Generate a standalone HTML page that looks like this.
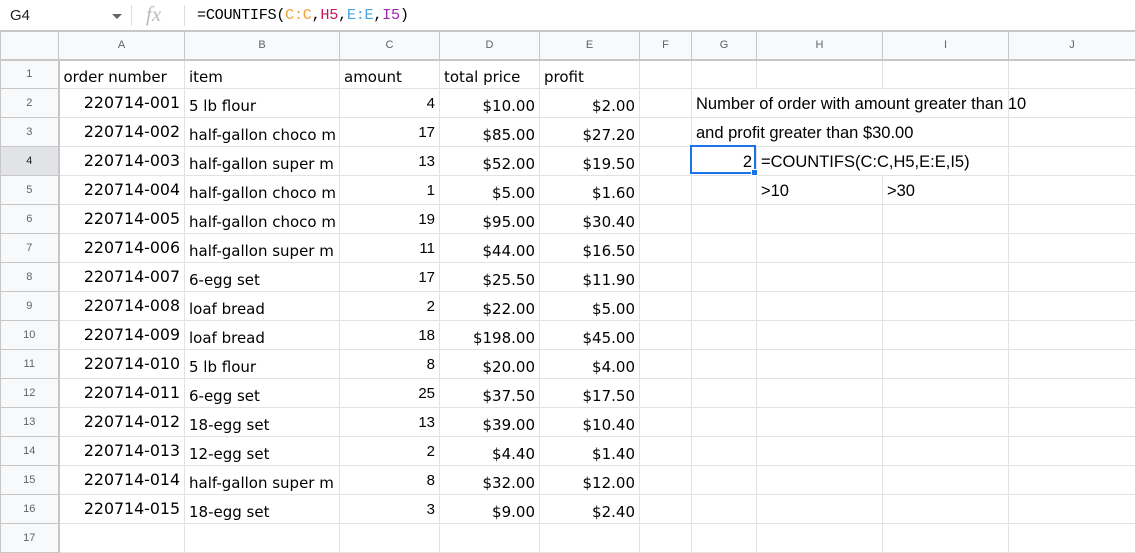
<!DOCTYPE html>
<html><head><meta charset="utf-8"><style>
*{margin:0;padding:0;box-sizing:border-box}
body{width:1135px;height:552px;overflow:hidden;background:#fff;font-family:"Liberation Sans",Arial,sans-serif;color:#000;position:relative}
#fb{position:absolute;left:0;top:0;width:1135px;height:31px;border-bottom:1px solid #c7c7c7;background:#fff}
#nb{position:absolute;left:10px;top:7px;font-size:15px;color:#222}
#arr{position:absolute;left:112px;top:14px;width:0;height:0;border-left:5px solid transparent;border-right:5px solid transparent;border-top:5px solid #666}
.sep{position:absolute;top:5px;width:1px;height:21px;background:#dadce0}
#fx{position:absolute;left:146px;top:2px;font-family:"Liberation Serif",serif;font-style:italic;font-size:21px;color:#bbb}
#fml{position:absolute;left:197px;top:6px;font-family:"Liberation Mono",monospace;font-size:15.2px;color:#000;letter-spacing:-0.3px}
table{position:absolute;left:0;top:31px;width:1135px;border-collapse:collapse;table-layout:fixed}
td{height:29px;border:1px solid #e2e2e2;white-space:nowrap;overflow:hidden;padding:0 4px;font-size:16.5px}
tr.h td{height:28px;background:#f8f9fa;color:#5f6368;font-size:11px;text-align:center;border-color:#c7c7c7;border-bottom:2px solid #c7c7c7}
td.rh{background:#f8f9fa;color:#5f6368;font-size:11px;text-align:center;border-color:#c7c7c7;border-right:2px solid #c7c7c7}
td.sel{background:#e1e3e6;color:#222}
.d{font-family:"DejaVu Sans",sans-serif;font-size:15px}
.n{text-align:right}
.am{font-size:15px;font-family:"Liberation Sans",sans-serif}
.a{text-align:right;vertical-align:top;padding-top:4px;font-size:15.8px}
.b{vertical-align:bottom;padding-bottom:2px}
.g{vertical-align:bottom;padding-bottom:3px}
#cur{position:absolute;left:690px;top:145px;width:66px;height:29px;border:2px solid #1a73e8}
#hd{position:absolute;left:751px;top:169px;width:7px;height:7px;background:#1a73e8;border:1px solid #fff}
</style></head><body>
<div id="fb"><div id="nb">G4</div><div id="arr"></div><div class="sep" style="left:131px"></div><div id="fx">fx</div><div class="sep" style="left:184px"></div>
<div id="fml">=COUNTIFS(<span style="color:#f4a13a">C:C</span>,<span style="color:#c2185b">H5</span>,<span style="color:#4aa3df">E:E</span>,<span style="color:#9c27b0">I5</span>)</div></div>
<table>
<colgroup><col style="width:58px"><col style="width:126px"><col style="width:155px"><col style="width:100px"><col style="width:100px"><col style="width:100px"><col style="width:52px"><col style="width:65px"><col style="width:126px"><col style="width:126px"><col style="width:127px"></colgroup>
<tr class="h"><td></td><td>A</td><td>B</td><td>C</td><td>D</td><td>E</td><td>F</td><td class="sel">G</td><td>H</td><td>I</td><td>J</td></tr>
<tr><td class="rh">1</td><td class="d b">order number</td><td class="d b">item</td><td class="d b">amount</td><td class="d b">total price</td><td class="d b">profit</td><td></td><td></td><td></td><td></td><td></td></tr>
<tr><td class="rh">2</td><td class="d a">220714-001</td><td class="d b">5 lb flour</td><td class="n am">4</td><td class="d n b">$10.00</td><td class="d n b">$2.00</td><td></td><td colspan="3" class="g" style="overflow:visible">Number of order with amount greater than 10</td><td></td></tr>
<tr><td class="rh">3</td><td class="d a">220714-002</td><td class="d b">half-gallon choco m</td><td class="n am">17</td><td class="d n b">$85.00</td><td class="d n b">$27.20</td><td></td><td colspan="3" class="g" style="overflow:visible">and profit greater than $30.00</td><td></td></tr>
<tr><td class="rh sel">4</td><td class="d a">220714-003</td><td class="d b">half-gallon super m</td><td class="n am">13</td><td class="d n b">$52.00</td><td class="d n b">$19.50</td><td></td><td class="n g">2</td><td colspan="2" class="g">=COUNTIFS(C:C,H5,E:E,I5)</td><td></td></tr>
<tr><td class="rh">5</td><td class="d a">220714-004</td><td class="d b">half-gallon choco m</td><td class="n am">1</td><td class="d n b">$5.00</td><td class="d n b">$1.60</td><td></td><td></td><td class="g">&gt;10</td><td class="g">&gt;30</td><td></td></tr>
<tr><td class="rh">6</td><td class="d a">220714-005</td><td class="d b">half-gallon choco m</td><td class="n am">19</td><td class="d n b">$95.00</td><td class="d n b">$30.40</td><td></td><td></td><td></td><td></td><td></td></tr>
<tr><td class="rh">7</td><td class="d a">220714-006</td><td class="d b">half-gallon super m</td><td class="n am">11</td><td class="d n b">$44.00</td><td class="d n b">$16.50</td><td></td><td></td><td></td><td></td><td></td></tr>
<tr><td class="rh">8</td><td class="d a">220714-007</td><td class="d b">6-egg set</td><td class="n am">17</td><td class="d n b">$25.50</td><td class="d n b">$11.90</td><td></td><td></td><td></td><td></td><td></td></tr>
<tr><td class="rh">9</td><td class="d a">220714-008</td><td class="d b">loaf bread</td><td class="n am">2</td><td class="d n b">$22.00</td><td class="d n b">$5.00</td><td></td><td></td><td></td><td></td><td></td></tr>
<tr><td class="rh">10</td><td class="d a">220714-009</td><td class="d b">loaf bread</td><td class="n am">18</td><td class="d n b">$198.00</td><td class="d n b">$45.00</td><td></td><td></td><td></td><td></td><td></td></tr>
<tr><td class="rh">11</td><td class="d a">220714-010</td><td class="d b">5 lb flour</td><td class="n am">8</td><td class="d n b">$20.00</td><td class="d n b">$4.00</td><td></td><td></td><td></td><td></td><td></td></tr>
<tr><td class="rh">12</td><td class="d a">220714-011</td><td class="d b">6-egg set</td><td class="n am">25</td><td class="d n b">$37.50</td><td class="d n b">$17.50</td><td></td><td></td><td></td><td></td><td></td></tr>
<tr><td class="rh">13</td><td class="d a">220714-012</td><td class="d b">18-egg set</td><td class="n am">13</td><td class="d n b">$39.00</td><td class="d n b">$10.40</td><td></td><td></td><td></td><td></td><td></td></tr>
<tr><td class="rh">14</td><td class="d a">220714-013</td><td class="d b">12-egg set</td><td class="n am">2</td><td class="d n b">$4.40</td><td class="d n b">$1.40</td><td></td><td></td><td></td><td></td><td></td></tr>
<tr><td class="rh">15</td><td class="d a">220714-014</td><td class="d b">half-gallon super m</td><td class="n am">8</td><td class="d n b">$32.00</td><td class="d n b">$12.00</td><td></td><td></td><td></td><td></td><td></td></tr>
<tr><td class="rh">16</td><td class="d a">220714-015</td><td class="d b">18-egg set</td><td class="n am">3</td><td class="d n b">$9.00</td><td class="d n b">$2.40</td><td></td><td></td><td></td><td></td><td></td></tr>
<tr><td class="rh">17</td><td></td><td></td><td></td><td></td><td></td><td></td><td></td><td></td><td></td><td></td></tr>
</table>
<div id="cur"></div><div id="hd"></div>
</body></html>
